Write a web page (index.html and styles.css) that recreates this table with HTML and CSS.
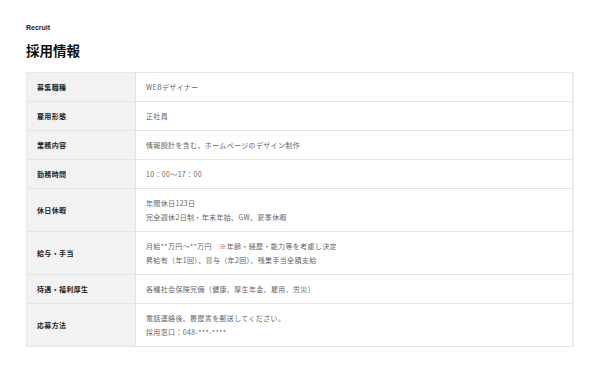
FILE: index.html
```html
<!DOCTYPE html>
<html lang="ja">
<head>
<meta charset="utf-8">
<link rel="stylesheet" href="styles.css">
</head>
<body>
<section class="recruit">
  <p class="sub">Recruit</p>
  <h1 class="title">採用情報</h1>
  <table class="info">
    <tr><th>募集職種</th><td>WEBデザイナー</td></tr>
    <tr><th>雇用形態</th><td>正社員</td></tr>
    <tr><th>業務内容</th><td>情報設計を含む、ホームページのデザイン制作</td></tr>
    <tr><th>勤務時間</th><td>10：00〜17：00</td></tr>
    <tr><th>休日休暇</th><td>年間休日123日<br>完全週休2日制・年末年始、GW、夏季休暇</td></tr>
    <tr><th>給与・手当</th><td>月給**万円〜**万円　※年齢・経歴・能力等を考慮し決定<br>昇給有（年1回）、賞与（年2回）、残業手当全額支給</td></tr>
    <tr><th>待遇・福利厚生</th><td>各種社会保険完備（健康、厚生年金、雇用、労災）</td></tr>
    <tr><th>応募方法</th><td>電話連絡後、履歴書を郵送してください。<br>採用窓口：048-***-****</td></tr>
  </table>
</section>
</body>
</html>
```
FILE: styles.css
```css
html, body {
  margin: 0;
  padding: 0;
  background: #fff;
}
body {
  font-family: "Noto Sans CJK JP", "Noto Sans", sans-serif;
  color: #333;
  -webkit-font-smoothing: antialiased;
}
.recruit {
  padding: 23px 26px 0 26px;
  width: 548px;
}
.sub {
  margin: 0;
  font-family: "Liberation Sans", "Noto Sans CJK JP", sans-serif;
  font-weight: bold;
  font-size: 7px;
  line-height: 10px;
  color: #222;
}
.title {
  margin: 7px 0 0 0;
  font-size: 13.5px;
  line-height: 20px;
  font-weight: bold;
  color: #111;
}
.info {
  margin-top: 12px;
  width: 548px;
  border-collapse: collapse;
  border: 1px solid #e8e8e8;
  border-right: 2px solid #ececec;
}
.info th, .info td {
  font-family: "Noto Sans CJK JP", sans-serif;
  font-size: 7px;
  line-height: 14px;
  letter-spacing: 0.05em;
  padding: 7px 10px;
  border-bottom: 1px solid #e4e4e4;
  text-align: left;
  vertical-align: middle;
}
.info th {
  width: 88px;
  background: #f2f2f2;
  color: #222;
  font-weight: bold;
  border-right: 1px solid #e4e4e4;
}
.info td {
  color: #666;
  font-weight: normal;
}
```
